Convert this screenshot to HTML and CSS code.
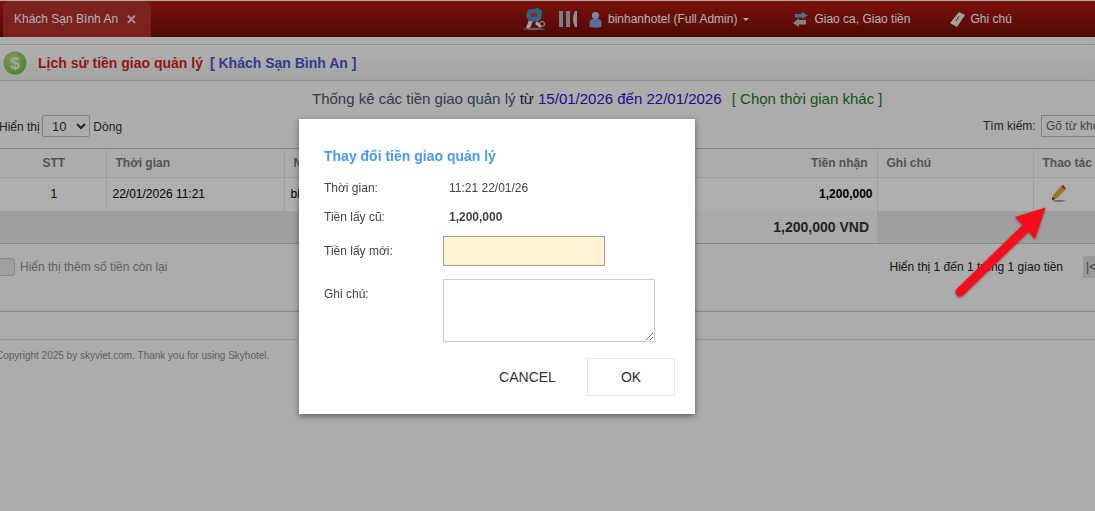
FILE: index.html
```html
<!DOCTYPE html>
<html lang="vi">
<head>
    <meta charset="UTF-8">
    <title>Lịch sử tiền giao quản lý</title>
    <link rel="stylesheet" href="styles.css">
</head>
<body>
    <header class="topbar">
        <div class="tab">
            <span>Khách Sạn Bình An</span>
            <span class="tab-close">✕</span>
        </div>
        <nav class="topnav">
            <svg class="ic-key" width="23" height="24" viewBox="0 0 23 24">
                <ellipse cx="11" cy="22" rx="11" ry="1.2" fill="#8c8c8c"/>
                <path d="M3 21 L6 13 L10 14 L7 21 Z" fill="#e8e8e8"/>
                <path d="M14 14 L19 19 L17 21 L12 17 Z" fill="#e8e8e8"/>
                <circle cx="19" cy="17" r="2.5" fill="none" stroke="#ddd" stroke-width="1"/>
                <path d="M5 3 L15 1 L19 4 L18 12 L14 15 L6 14 L3 9 Z" fill="#4a8fbc"/>
                <rect x="8" y="6" width="6" height="4" rx="1.5" fill="#c0392b"/>
            </svg>
            <svg class="ic-bars" width="18" height="16" viewBox="0 0 18 16">
                <rect x="0" y="0" width="4" height="16" fill="#a8b6cc"/>
                <rect x="7" y="0" width="4" height="16" fill="#a8b6cc"/>
                <path d="M18 0 V16 H16 Q14 12 14 8 Q14 4 16 0 Z" fill="#c4cedd"/>
            </svg>
            <a class="nav-item nav-user">
                <svg width="13" height="17" viewBox="0 0 13 17">
                    <circle cx="6.5" cy="4.5" r="3.6" fill="#a9c0e6"/>
                    <path d="M0.5 16 V12 Q0.5 8.5 4 8 H9 Q12.5 8.5 12.5 12 V16 Q6.5 17.5 0.5 16 Z" fill="#7e9fd8"/>
                </svg>
                <span>binhanhotel (Full Admin)</span>
                <i class="caret"></i>
            </a>
            <a class="nav-item nav-shift">
                <svg width="15" height="15" viewBox="0 0 15 15">
                    <path d="M2 2 H9 V0 L15 3.500 L9 7 V5.500 H2 Z" fill="#6a9cc6"/>
                    <path d="M13 8 H6 V6.500 L0 11 L6 15 V12.500 H13 Z" fill="#bdbdbd"/>
                </svg>
                <span>Giao ca, Giao tiền</span>
            </a>
            <a class="nav-item nav-note">
                <svg width="15" height="15" viewBox="0 0 15 15">
                    <path d="M9 0 L15 3 L7 15 L0 11 Z" fill="#e9e6dc"/>
                    <path d="M9 4 L6 9" stroke="#555" stroke-width="1"/>
                </svg>
                <span>Ghi chú</span>
            </a>
        </nav>
    </header>

    <div class="titlebar">
        <svg width="24" height="24" viewBox="0 0 24 24">
            <defs>
                <radialGradient id="coin" cx="0.4" cy="0.35" r="0.7">
                    <stop offset="0" stop-color="#b5e08a"/>
                    <stop offset="1" stop-color="#77b84a"/>
                </radialGradient>
            </defs>
            <circle cx="12" cy="12" r="11.5" fill="url(#coin)"/>
            <text x="12" y="18" text-anchor="middle" class="coin-sign">$</text>
        </svg>
        <span class="page-title">Lịch sử tiền giao quản lý</span>
        <span class="hotel-name">[ Khách Sạn Bình An ]</span>
    </div>

    <main class="page">
        <p class="stats">
            Thống kê các tiền giao quản lý <span class="dark">từ</span>
            <span class="dates">15/01/2026 đến 22/01/2026</span>
            <a class="other-time">[ Chọn thời gian khác ]</a>
        </p>

        <div class="tools">
            <label class="length">
                Hiển thị
                <select><option>10</option></select>
                Dòng
            </label>
            <label class="search">
                Tìm kiếm:
                <input type="text" placeholder="Gõ từ khóa">
            </label>
        </div>

        <table class="grid">
            <colgroup>
                <col class="c-stt"><col class="c-time"><col class="c-name">
                <col class="c-money"><col class="c-note"><col class="c-act">
            </colgroup>
            <thead>
                <tr>
                    <th class="center">STT</th>
                    <th>Thời gian</th>
                    <th>N</th>
                    <th class="right">Tiền nhận</th>
                    <th>Ghi chú</th>
                    <th>Thao tác</th>
                </tr>
            </thead>
            <tbody>
                <tr>
                    <td class="center">1</td>
                    <td>22/01/2026 11:21</td>
                    <td>bi</td>
                    <td class="right strong">1,200,000</td>
                    <td></td>
                    <td>
                        <svg class="pencil" width="15" height="17" viewBox="0 0 15 17">
                            <ellipse cx="8" cy="15.8" rx="6.5" ry="0.9" fill="#999"/>
                            <path d="M1 15 L2 10 L10 1.5 L14 5 L6 13.5 Z" fill="#d9ae3c"/>
                            <path d="M10 1.5 L12 0 L15 3 L14 5 Z" fill="#c0392b"/>
                            <path d="M1 15 L1.6 12 L4 14 Z" fill="#222"/>
                        </svg>
                    </td>
                </tr>
            </tbody>
            <tfoot>
                <tr>
                    <td colspan="3"></td>
                    <td class="total">1,200,000 VND</td>
                    <td colspan="2"></td>
                </tr>
            </tfoot>
        </table>

        <div class="under">
            <label class="more">
                <i class="check"></i>
                Hiển thị thêm số tiền còn lại
            </label>
            <div class="paging">
                <span>Hiển thị 1 đến 1 trong 1 giao tiền</span>
                <a class="pager">|&lt;</a>
            </div>
        </div>

        <div class="spacer"></div>
        <footer class="copyright">Copyright 2025 by skyviet.com. Thank you for using Skyhotel.</footer>
    </main>

    <div class="overlay"></div>

    <form class="dialog">
        <h2>Thay đổi tiền giao quản lý</h2>
        <div class="row row-time">
            <label>Thời gian:</label>
            <span class="value">11:21 22/01/26</span>
        </div>
        <div class="row row-old">
            <label>Tiền lấy cũ:</label>
            <b class="value">1,200,000</b>
        </div>
        <div class="row row-new">
            <label>Tiền lấy mới:</label>
            <input type="text">
        </div>
        <div class="row row-note">
            <label>Ghi chú:</label>
            <textarea></textarea>
        </div>
        <div class="actions">
            <button type="button" class="btn-cancel">CANCEL</button>
            <button type="button" class="btn-ok">OK</button>
        </div>
    </form>

    <svg class="arrow" width="110" height="105" viewBox="0 0 110 105">
        <defs>
            <filter id="soft" x="-20%" y="-20%" width="140%" height="140%">
                <feDropShadow dx="0" dy="1" stdDeviation="1.2" flood-color="#000" flood-opacity="0.45"/>
            </filter>
        </defs>
        <g filter="url(#soft)">
            <path d="M10 90 L78 24" stroke="#f50f1c" stroke-width="9" stroke-linecap="round"/>
            <path d="M95.500 5.500 L65 15 L85 37 Z" fill="#f50f1c"/>
        </g>
    </svg>
</body>
</html>
```

FILE: styles.css
```css
* {
    margin: 0;
    padding: 0;
    box-sizing: border-box;
}

body {
    width: 1095px;
    height: 511px;
    overflow: hidden;
    background: #f6f6f6;
    color: #333;
    font-family: "Liberation Sans", Arial, sans-serif;
    font-size: 12px;
}

/* top bar */
.topbar {
    height: 36px;
    margin-top: 1px;
    display: flex;
    background: linear-gradient(#b21a10, #700c07);
    color: #fff;
}

.tab {
    width: 148px;
    margin-left: 3px;
    padding: 0 11px;
    display: flex;
    align-items: center;
    justify-content: space-between;
    background: #b3302a;
    border-radius: 6px 6px 0 0;
    font-size: 12px;
}

.tab-close {
    font-size: 13px;
    font-weight: bold;
    margin-right: 3px;
    color: #e6d6d6;
}

.topnav {
    display: flex;
    align-items: center;
    padding-left: 372px;
}

.ic-bars {
    margin-left: 13px;
}

.nav-item {
    display: flex;
    align-items: center;
    gap: 6px;
}

.nav-user {
    margin-left: 12px;
}

.nav-shift {
    margin-left: 44px;
}

.nav-note {
    margin-left: 40px;
    gap: 5px;
}

.caret {
    width: 0;
    height: 0;
    border: 3.500px solid transparent;
    border-top-color: #fff;
    border-bottom: 0;
}

/* title */
.titlebar {
    height: 37px;
    margin-top: 7px;
    padding-left: 3px;
    display: flex;
    align-items: center;
    background: linear-gradient(#fbfbfb, #ececec);
    border-top: 1px solid #cfcfcf;
    border-bottom: 1px solid #cfcfcf;
    font-size: 14px;
    font-weight: bold;
}

.coin-sign {
    fill: #e6f2d6;
    font-family: "Liberation Sans", Arial, sans-serif;
    font-size: 17px;
    font-weight: bold;
}

.page-title {
    margin-left: 11px;
    color: #d41f1f;
}

.hotel-name {
    margin-left: 7px;
    color: #4a55c8;
}

/* page body */
.page {
    margin-left: -4px;
    width: 1120px;
}

.stats {
    height: 33px;
    padding-left: 316px;
    line-height: 35px;
    font-size: 15px;
    color: #4a5570;
    white-space: nowrap;
}

.stats .dark {
    color: #223;
}

.dates {
    color: #2a12c8;
}

.other-time {
    margin-left: 6px;
    color: #1e7a1e;
}

.tools {
    height: 34px;
    padding: 1px 0 0 3px;
    display: flex;
    justify-content: space-between;
    color: #333;
}

.length select {
    width: 48px;
    height: 22px;
    margin-left: -1px;
    background: #f6f6f6;
    border: 1px solid #bbb;
    border-radius: 2px;
    font-family: "Liberation Sans", Arial, sans-serif;
    font-size: 13px;
    color: #333;
    padding-left: 5px;
}

.search {
    display: block;
}

.search input {
    width: 75px;
    height: 22px;
    margin-left: 2px;
    padding-left: 4px;
    border: 1px solid #bbb;
    background: #f6f6f6;
    font-family: "Liberation Sans", Arial, sans-serif;
    font-size: 12px;
}

.search input::placeholder {
    color: #666;
}

/* table */
.grid {
    width: 1120px;
    table-layout: fixed;
    border-collapse: collapse;
    border-top: 1px solid #c4c4c4;
    border-bottom: 1px solid #c4c4c4;
}

.c-stt { width: 110px; }
.c-time { width: 178px; }
.c-name { width: 300px; }
.c-money { width: 293px; }
.c-note { width: 156px; }
.c-act { width: 83px; }

.grid th {
    height: 29px;
    padding: 0 9px;
    text-align: left;
    font-size: 12px;
    color: #777;
    border-left: 1px solid #e2e2e2;
    border-bottom: 1px solid #e2e2e2;
}

.grid th:first-child {
    border-left: 0;
}

.grid tbody td {
    height: 33px;
    padding: 0 6px;
    color: #000;
    border-left: 1px solid #e2e2e2;
    background: #fafafa;
}

.grid tbody td:first-child {
    border-left: 0;
}

.grid th.right,
.grid td.right {
    text-align: right;
}

.grid td.right {
    padding-right: 4px;
}

.grid th.right {
    padding-right: 9px;
}

.grid th.center,
.grid td.center {
    padding-left: 12px;
    padding-right: 6px;
    text-align: center;
}

.strong {
    font-weight: bold;
}

.pencil {
    display: block;
    margin: -1px 0 0 11px;
}

.grid tfoot td {
    height: 33px;
    background: #e2e2e2;
}

.grid tfoot .total {
    padding-right: 8px;
    text-align: right;
    background: #f4f4f4;
    color: #333;
    font-size: 14px;
    font-weight: bold;
}

/* under the table */
.under {
    height: 67px;
    padding-top: 14px;
    display: flex;
    justify-content: space-between;
}

.more {
    display: flex;
    align-items: flex-start;
    gap: 5px;
    color: #8b8b8b;
    line-height: 18px;
}

.check {
    width: 19px;
    height: 18px;
    background: #e4e4e4;
    border: 1px solid #c4c4c4;
    border-radius: 3px;
}

.paging {
    display: flex;
    align-items: flex-start;
    gap: 20px;
    line-height: 18px;
    color: #222;
    padding-right: 8px;
}

.pager {
    width: 25px;
    height: 22px;
    margin-top: -2px;
    padding-left: 3px;
    line-height: 22px;
    background: #dcdcdc;
    color: #555;
}

.spacer {
    height: 29px;
    border-top: 1px solid #c4c4c4;
    border-bottom: 1px solid #cfcfcf;
    box-shadow: 0 -1px 2px rgba(0, 0, 0, 0.1);
}

.copyright {
    padding-top: 10px;
    font-size: 10px;
    color: #8a8a8a;
}

/* modal */
.overlay {
    position: fixed;
    inset: 0;
    background: rgba(0, 0, 0, 0.3);
}

.dialog {
    position: absolute;
    left: 299px;
    top: 119px;
    width: 396px;
    height: 295px;
    padding: 29px 20px 0 25px;
    background: #fff;
    box-shadow: 0 2px 6px rgba(0, 0, 0, 0.45);
    color: #444;
}

.dialog h2 {
    height: 16px;
    margin-bottom: 13px;
    line-height: 16px;
    font-size: 14px;
    color: #4a9af0;
}

.row {
    display: grid;
    grid-template-columns: 119px 1fr;
}

.row label {
    line-height: 22px;
}

.row .value {
    padding-left: 6px;
    line-height: 22px;
}

.row-time {
    margin-bottom: 7px;
}

.row-old {
    margin-bottom: 8px;
}

.row-new {
    margin-bottom: 13px;
    align-items: center;
}

.row-new input {
    width: 162px;
    height: 30px;
    background: #fff3d6;
    border: 1px solid #a59f87;
}

.row-note label {
    padding-top: 4px;
}

.row-note textarea {
    display: block;
    width: 212px;
    height: 63px;
    border: 1px solid #ccc;
}

.actions {
    margin-top: 16px;
    display: flex;
    justify-content: flex-end;
    align-items: center;
    gap: 18px;
}

.actions button {
    height: 38px;
    background: #fff;
    color: #333;
    font-family: "Liberation Sans", Arial, sans-serif;
    font-size: 14px;
}

.btn-cancel {
    width: 83px;
    border: 0;
}

.btn-ok {
    width: 88px;
    border: 1px solid #e6e6e6;
}

.arrow {
    position: absolute;
    left: 950px;
    top: 202px;
}
```
